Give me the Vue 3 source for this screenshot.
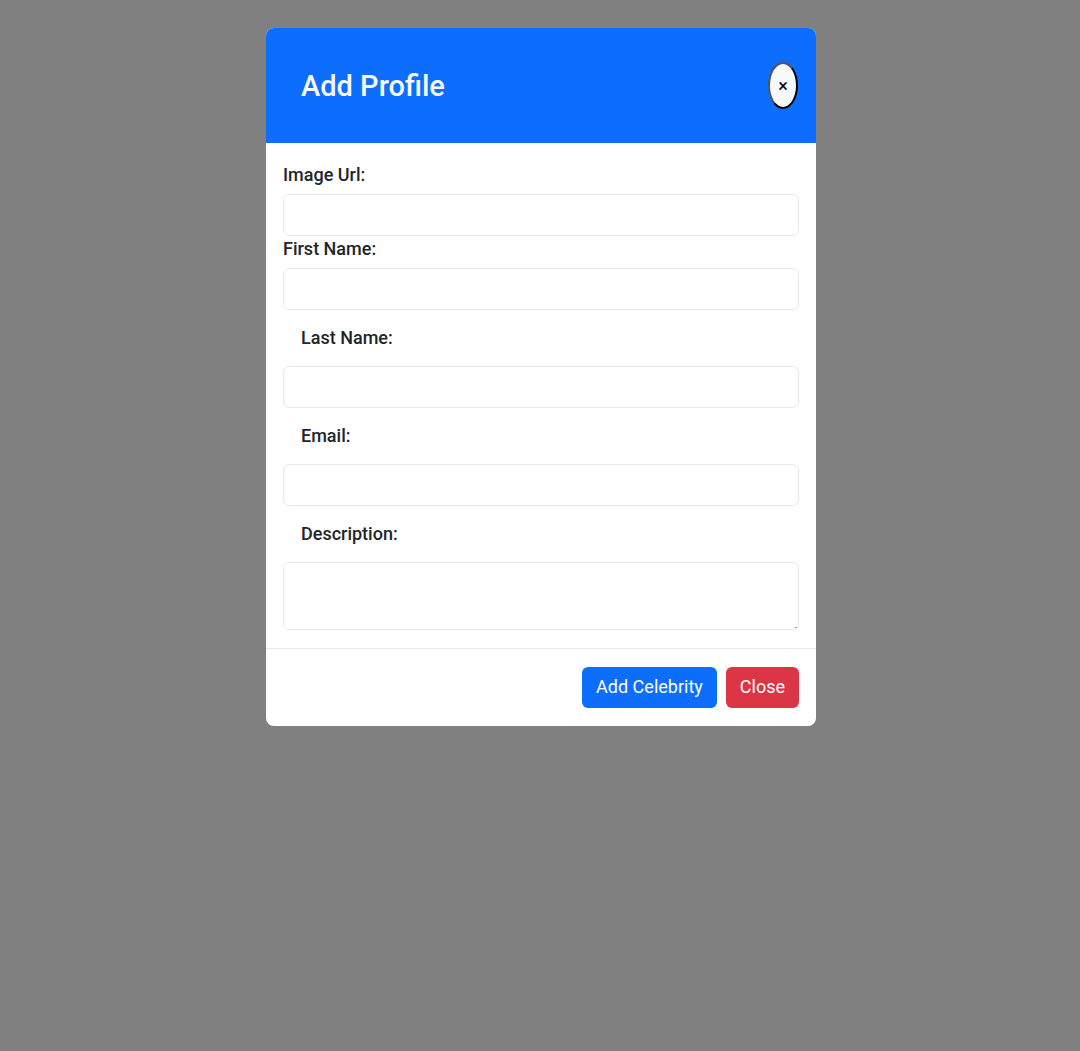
<script setup>
import { reactive } from 'vue'

const profile = reactive({
  imageUrl: '',
  firstName: '',
  lastName: '',
  email: '',
  description: '',
})

const fields = [
  { key: 'imageUrl', label: 'Image Url:', type: 'text', inset: false },
  { key: 'firstName', label: 'First Name:', type: 'text', inset: false },
  { key: 'lastName', label: 'Last Name:', type: 'text', inset: true },
  { key: 'email', label: 'Email:', type: 'email', inset: true },
]
</script>

<template>
  <div class="backdrop">
    <form class="modal" role="dialog" aria-labelledby="modal-title" @submit.prevent>
      <header class="modal-header">
        <h1 id="modal-title" class="modal-title">Add Profile</h1>
        <button type="button" class="dismiss" aria-label="Dismiss">×</button>
      </header>

      <div class="modal-body">
        <template v-for="field in fields" :key="field.key">
          <label :for="field.key" class="label" :class="{ inset: field.inset }">{{ field.label }}</label>
          <input :id="field.key" v-model="profile[field.key]" class="control" :type="field.type" />
        </template>
        <label for="description" class="label inset">Description:</label>
        <textarea id="description" v-model="profile.description" class="control area"></textarea>
      </div>

      <footer class="modal-footer">
        <button type="submit" class="btn primary">Add Celebrity</button>
        <button type="button" class="btn danger">Close</button>
      </footer>
    </form>
  </div>
</template>

<style>
body {
  margin: 0;
  background: #808080;
}
</style>

<style scoped>
.backdrop,
.backdrop * {
  box-sizing: border-box;
}

.backdrop {
  display: flex;
  justify-content: center;
  align-items: flex-start;
  min-height: 100vh;
  padding: 28px 16px;
  background: #808080;
  color: #212529;
  font-family: Roboto, "Liberation Sans", sans-serif;
  font-size: 18px;
  line-height: 26px;
}

.modal {
  width: 100%;
  max-width: 550px;
  margin-left: 2px;
  overflow: hidden;
  border-radius: 8px;
  background: #fff;
}

.modal-header {
  display: flex;
  align-items: center;
  justify-content: space-between;
  padding: 34px 18px 34px 35px;
  background: #0d6efd;
}

.modal-title {
  margin: 0;
  color: #f8f9fa;
  font-size: 29px;
  font-weight: 500;
  line-height: 36px;
}

.dismiss {
  width: 30px;
  height: 47px;
  padding: 0;
  border: 2px outset #000;
  border-radius: 50%;
  background: #f8f9fa;
  color: #000;
  font: inherit;
}

.modal-body {
  display: flex;
  flex-direction: column;
  padding: 19px 17px 18px;
}

.label {
  margin-bottom: 6px;
  font-weight: 500;
}

.label.inset {
  margin: 0;
  padding: 15px 18px;
}

.control {
  display: block;
  width: 100%;
  height: 42px;
  padding: 6px 13px;
  border: 1px solid #e6e8ea;
  border-radius: 6px;
  outline: 0;
  background: #fff;
  color: inherit;
  font: inherit;
}

.area {
  height: 68px;
  resize: vertical;
}

.area::-webkit-resizer {
  background: linear-gradient(#999, #999) right 1px bottom 1px / 2px 1px no-repeat;
}

.modal-footer {
  display: flex;
  justify-content: flex-end;
  gap: 9px;
  padding: 18px 17px;
  border-top: 1px solid #e6e8ea;
}

.btn {
  height: 41px;
  padding: 0 14px 2px;
  border: 0;
  border-radius: 6px;
  color: #fff;
  font: inherit;
}

.primary {
  background: #0d6efd;
}

.danger {
  background: #dc3545;
}
</style>
